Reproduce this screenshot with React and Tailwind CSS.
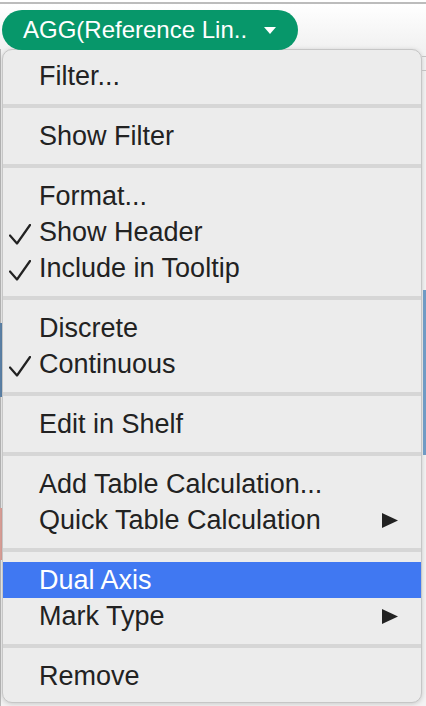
import React from 'react';

const items = [
  [{ label: 'Filter...' }],
  [{ label: 'Show Filter' }],
  [{ label: 'Format...' }, { label: 'Show Header', checked: true }, { label: 'Include in Tooltip', checked: true }],
  [{ label: 'Discrete' }, { label: 'Continuous', checked: true }],
  [{ label: 'Edit in Shelf' }],
  [{ label: 'Add Table Calculation...' }, { label: 'Quick Table Calculation', submenu: true }],
  [{ label: 'Dual Axis', active: true }, { label: 'Mark Type', submenu: true }],
  [{ label: 'Remove' }],
];

function Check() {
  return (
    <svg width="22" height="21" viewBox="0 0 22 21" className="ml-[6px] mt-[4px]">
      <path d="M1 11.5 L8 19.5 L21 1" fill="none" stroke="currentColor" strokeWidth="2.2" strokeLinecap="round" strokeLinejoin="round" />
    </svg>
  );
}

function Arrow() {
  return (
    <svg width="16" height="15" viewBox="0 0 16 15" className="ml-auto mr-[23px]">
      <path d="M0 0 L16 7.5 L0 15 Z" fill="currentColor" />
    </svg>
  );
}

function Row({ item }) {
  return (
    <div className={`h-[36px] flex items-center ${item.active ? 'bg-[#4078f2] text-white' : 'text-[#222]'}`}>
      <div className="w-[36px] shrink-0 flex items-center">{item.checked && <Check />}</div>
      <span className="text-[27px] leading-none whitespace-nowrap">{item.label}</span>
      {item.submenu && <Arrow />}
    </div>
  );
}

export default function App() {
  return (
    <div className="w-[426px] h-[706px] overflow-hidden bg-[#f3f3f3] font-['Liberation_Sans','Helvetica',sans-serif]">
      <div className="h-[2px] bg-white" />
      <div className="h-[2px] bg-[#bcbcbc]" />
      <div className="bg-gradient-to-b from-white to-[#f1f1f1] pt-[6px]">
        <div className="relative z-10 ml-[2px] h-[40px] w-[296px] rounded-full bg-[#07976a] flex items-center pl-[21px] text-white">
          <span className="text-[24px] leading-none whitespace-nowrap">AGG(Reference Lin..</span>
          <svg width="12" height="7" viewBox="0 0 12 7" className="ml-[17px] mt-[1px]">
            <path d="M0 0 L12 0 L6 7 Z" fill="currentColor" />
          </svg>
        </div>
      </div>

      <div className="-mt-px flex items-start">
        {/* left edge of the chart behind */}
        <div className="w-[2px] shrink-0 flex flex-col">
          <div className="h-[274px] w-px bg-[#b8b8b8]" />
          <div className="h-[74px] bg-[#5f86ad]" />
          <div className="h-[111px] w-px bg-[#b8b8b8]" />
          <div className="h-[52px] bg-[#e0a49c]" />
          <div className="h-[146px] w-px bg-[#b8b8b8]" />
        </div>

        <div className="w-[420px] shrink-0 rounded-[10px] border border-[#c6c6c6] bg-[#ececec] py-[8px] shadow-[0_1px_5px_rgba(0,0,0,0.18)] overflow-hidden">
          {items.map((group, gi) => (
            <div key={gi}>
              {gi > 0 && (
                <div className="py-[10px]">
                  <div className="h-[4px] bg-[#d6d6d6]" />
                </div>
              )}
              {group.map(item => <Row key={item.label} item={item} />)}
            </div>
          ))}
        </div>

        {/* right edge of the chart behind */}
        <div className="w-[4px] shrink-0 flex flex-col pt-[7px]">
          <div className="h-px bg-[#c2c2c2]" />
          <div className="h-[13px]" />
          <div className="h-px bg-[#c2c2c2]" />
          <div className="h-[219px]" />
          <div className="h-[165px] ml-px bg-[#6f9bc4]" />
        </div>
      </div>
    </div>
  );
}
